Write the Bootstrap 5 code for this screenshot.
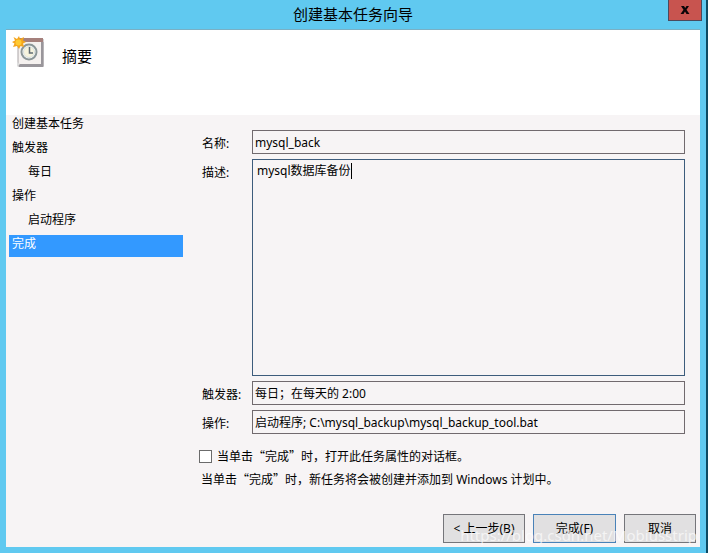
<!DOCTYPE html>
<html lang="zh-CN">
<head>
<meta charset="utf-8">
<meta name="viewport" content="width=device-width, initial-scale=1">
<title>创建基本任务向导</title>
<link href="https://cdn.jsdelivr.net/npm/bootstrap@5.3.0/dist/css/bootstrap.min.css" rel="stylesheet">
<style>
  body { font-family: "Noto Sans", "Noto Sans CJK SC", sans-serif; font-size: 12px; line-height: 16px; color: #000; background: #0d4a63; padding-right: 2px; }
  .wizard { background: #60c9f0; padding: 0 6px 6px; }
  .title-bar { height: 29px; }
  .title-bar h1 { font-size: 15px; line-height: 28px; }
  .close-btn { width: 34px; height: 21px; right: -2px; background: #c8544f; border: 1px solid #4a4a5e; border-top: 0; }
  .pane { background: #f7f4f5; border-top: 1px solid #7ab0c4; }
  .step-head { height: 85px; padding: 6px 6px; gap: 16px; }
  .step-head h2 { font-size: 15px; line-height: 24px; padding-top: 8px; }
  .steps { width: 177px; padding: 0 0 0 3px; }
  .steps a { display: block; color: #000; text-decoration: none; height: 24px; line-height: 18px; padding-left: 3px; }
  .steps a.sub { padding-left: 19px; }
  .steps a.active { height: 22px; background: #3399ff; color: #fff; }
  .form-area { padding: 15px 15px 0 16px; }
  .field { gap: 4px; }
  .field label { width: 49px; flex-shrink: 0; padding: 6px 0 0 3px; }
  .box { font: inherit; color: #000; background: #f7f4f5; border: 1px solid #716a6e; border-radius: 0; padding: 2px; line-height: 18px; height: 24px; width: 100%; display: block; outline: 0; }
  .box.desc { border-color: #3d5c7c; height: 100%; min-height: 80px; resize: none; padding: 2px 4px; }
  .caret-bar { width: 1px; height: 16px; top: 4px; left: 99px; background: #000; }
  .rows { gap: 5px; }
  .notes { padding: 14px 0 0 16px; font-family: "Noto Sans CJK SC", sans-serif; gap: 7px; }
  .notes .latin { font-family: "Noto Sans", sans-serif; }
  .notes .note-line { padding-left: 2px; }
  .notes input { appearance: none; width: 13px; height: 13px; border: 1px solid #6b6b6b; background: #fff; margin: 0 1px 0 0; }
  .notes input:checked { background: #3399ff; }
  .actions { padding: 26px 4px 4px; gap: 8px; }
  .actions button { font: inherit; color: #000; height: 29px; width: 82px; border: 1px solid #75757a; background: #e1e0e1; padding: 0; }
  .actions .primary { border-color: #4a82b8; width: 83px; }
  .actions .narrow { width: 72px; }
  .stamp { right: 3px; bottom: 2px; font-size: 15px; line-height: 20px; color: #fff; opacity: .65; pointer-events: none; }
</style>
<script src="https://cdn.jsdelivr.net/npm/bootstrap@5.3.0/dist/js/bootstrap.bundle.min.js" defer></script>
</head>
<body>
<main class="wizard d-flex flex-column min-vh-100">
  <header class="title-bar position-relative text-center">
    <h1 class="m-0 fw-normal">创建基本任务向导</h1>
    <button type="button" class="close-btn position-absolute top-0 p-0 d-flex align-items-center justify-content-center" aria-label="关闭">
      <svg width="10" height="8" viewBox="0 0 10 8" aria-hidden="true"><path d="M1 0h3l1.200 2L6.500 0H9L6.500 3.800 9.500 8h-3L5 5.600 3.500 8h-3l3-4.200z" fill="#0a0508"/></svg>
    </button>
  </header>
  <form class="pane d-flex flex-column flex-grow-1 position-relative">
    <div class="step-head bg-white d-flex align-items-start">
      <svg width="34" height="34" viewBox="0 0 34 34" aria-hidden="true">
        <path d="M6 3h25v27H6z" fill="#f5f1ef" stroke="#aaa5a7"/>
        <path d="M6 2h25v4H6z" fill="#a5807c"/>
        <path d="M29 6h2.500v25H7v-3h22z" fill="#99969b"/>
        <path d="M5 26v5l3-3z" fill="#ddd"/>
        <circle cx="17" cy="16" r="7.500" fill="#fff" stroke="#8b9697" stroke-width="2"/>
        <circle cx="17" cy="16" r="5.500" fill="#f6f3dd" stroke="#d8dfde"/>
        <path d="M17.500 11v6H21" fill="none" stroke="#626d74" stroke-width="1.500"/>
        <path d="M7 0l1 3 4-2-1 3.500 3 1.500-3 1.500L12 11l-3.500-1L7 13l-2-3-4 1 1.500-3.500L0 6l3-1.500L1.500 1 5 3z" fill="#f4a51c"/>
        <circle cx="6.500" cy="6.500" r="3" fill="#ffca32"/>
      </svg>
      <h2 class="m-0 fw-normal">摘要</h2>
    </div>
    <div class="d-flex flex-grow-1">
      <nav class="steps flex-shrink-0" aria-label="步骤">
        <a href="#">创建基本任务</a>
        <a href="#">触发器</a>
        <a href="#" class="sub">每日</a>
        <a href="#">操作</a>
        <a href="#" class="sub">启动程序</a>
        <a href="#" class="active" aria-current="step">完成</a>
      </nav>
      <div class="flex-grow-1 d-flex flex-column">
        <div class="form-area rows d-flex flex-column flex-grow-1">
          <div class="field d-flex"><label for="name">名称:</label><input class="box" id="name" type="text" value="mysql_back"></div>
          <div class="field d-flex flex-grow-1"><label for="desc">描述:</label>
            <div class="position-relative flex-grow-1"><textarea class="box desc" id="desc">mysql数据库备份</textarea><span class="caret-bar position-absolute"></span></div>
          </div>
          <div class="field d-flex"><label for="trig">触发器:</label><input class="box" id="trig" type="text" readonly value="每日；在每天的 2:00"></div>
          <div class="field d-flex"><label for="act">操作:</label><input class="box" id="act" type="text" readonly value="启动程序; C:\mysql_backup\mysql_backup_tool.bat"></div>
        </div>
        <div class="notes d-flex flex-column">
          <div class="d-flex align-items-center"><input type="checkbox" id="openprops"><label for="openprops" class="ps-1">当单击“完成”时，打开此任务属性的对话框。</label></div>
          <div class="note-line">当单击“完成”时，新任务将会被创建并添加到<span class="latin"> Windows </span>计划中。</div>
        </div>
      </div>
    </div>
    <div class="actions d-flex justify-content-end">
      <button type="button">&lt; 上一步(B)</button>
      <button type="submit" class="primary">完成(F)</button>
      <button type="button" class="narrow">取消</button>
    </div>
    <span class="stamp position-absolute">https://blog.csdn.net/Mobiusstrip</span>
  </form>
</main>
</body>
</html>
